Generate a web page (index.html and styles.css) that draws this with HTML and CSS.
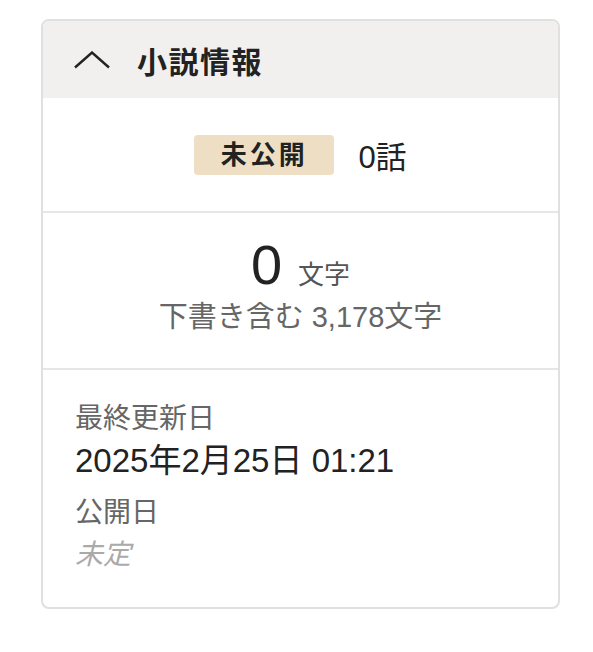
FILE: index.html
```html
<!DOCTYPE html>
<html lang="ja">

<head>
    <meta charset="UTF-8">
    <meta name="viewport" content="width=device-width, initial-scale=1.0">
    <title>小説情報</title>
    <link rel="stylesheet" href="styles.css">
</head>

<body>
    <div class="card">
        <div class="card_header">
            <svg class="chevron" width="36" height="18" viewBox="0 0 36 18">
                <polyline points="1,16.5 18,1.5 35,16.5" fill="none" stroke="#222" stroke-width="2.4" />
            </svg>
            <p class="title">小説情報</p>
        </div>

        <div class="section status">
            <span class="badge">未公開</span>
            <span class="episodes">0話</span>
        </div>

        <div class="section counts">
            <p class="count"><span class="count_num">0</span><span class="count_unit">文字</span></p>
            <p class="draft">下書き含む 3,178文字</p>
        </div>

        <div class="section dates">
            <p class="label">最終更新日</p>
            <p class="value">2025年2月25日 01:21</p>
            <p class="label label_second">公開日</p>
            <p class="value empty">未定</p>
        </div>
    </div>
</body>

</html>
```

FILE: styles.css
```css
* {
    margin: 0;
    padding: 0;
    box-sizing: border-box;
}

body {
    padding: 19px 0 0 41px;
    background: #fff;
    font-family: "Liberation Sans", "Noto Sans CJK JP", sans-serif;
    color: #222;
}

.card {
    width: 519px;
    border: 2px solid #e0e0e0;
    border-radius: 8px;
    overflow: hidden;
}

.card_header {
    display: flex;
    align-items: center;
    height: 77px;
    padding-left: 31px;
    background-color: #f2f0ef;
}

.chevron {
    margin-right: 27px;
}

.title {
    font-size: 30px;
    font-weight: bold;
    letter-spacing: 1.5px;
    color: #222;
}

.section {
    border-top: 2px solid #e6e6e6;
}

.card_header + .section {
    border-top: none;
}

.status {
    display: flex;
    justify-content: center;
    align-items: center;
    gap: 24px;
    height: 113px;
}

.badge {
    display: inline-block;
    width: 140px;
    height: 40px;
    line-height: 40px;
    text-align: center;
    background-color: #eedfc4;
    border-radius: 4px;
    font-size: 26px;
    font-weight: bold;
    letter-spacing: 3px;
    color: #222;
}

.episodes {
    font-size: 31px;
    color: #222;
}

.counts {
    display: flex;
    flex-direction: column;
    align-items: center;
    height: 157px;
    padding-top: 24px;
}

.count {
    display: flex;
    align-items: baseline;
    gap: 16px;
    line-height: 1;
}

.count_num {
    font-size: 56px;
}

.count_unit {
    font-size: 26px;
    color: #555;
}

.draft {
    margin-top: 7px;
    font-size: 29px;
    line-height: 1.2;
    color: #666;
}

.dates {
    height: 239px;
    padding: 29px 32px 0;
}

.label {
    font-size: 28px;
    line-height: 40px;
    color: #666;
}

.label_second {
    margin-top: 10px;
}

.value {
    font-size: 33px;
    line-height: 44px;
    color: #222;
}

.empty {
    font-size: 28px;
    font-style: italic;
    color: #aaa;
}
```
